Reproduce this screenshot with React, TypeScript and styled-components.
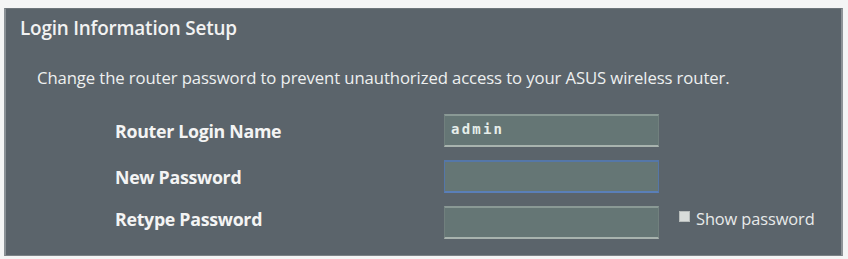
import React from "react";
import styled, { createGlobalStyle } from "styled-components";

const Global = createGlobalStyle`
  html, body { margin: 0; padding: 0; background: #f4f5f5; }
  body { font-family: "Open Sans", "Liberation Sans", sans-serif; }
`;

const Page = styled.div`
  width: 848px;
  height: 259px;
  padding: 8px 5px 3px 4px;
  box-sizing: border-box;
`;

const Panel = styled.section`
  height: 100%;
  box-sizing: border-box;
  background: #5b646b;
  border-left: 2px solid #8a9196;
  border-right: 2px solid #8d9397;
  border-top: 1px solid #6d757a;
  border-bottom: 1px solid #7b8286;
  padding: 6px 0 0 14px;
  color: #f2f2f2;
`;

const Title = styled.h1`
  margin: 0;
  font-size: 18.9px;
  font-weight: 600;
  line-height: 26px;
  letter-spacing: -0.2px;
`;

const Desc = styled.p`
  margin: 27px 0 0 17px;
  font-size: 16.7px;
  line-height: 20px;
  letter-spacing: -0.1px;
  color: #eef0f0;
`;

const Form = styled.div`
  display: grid;
  grid-template-columns: 329px 215px auto;
  row-gap: 13px;
  margin: 26px 0 0 95px;
  align-items: center;
`;

const Label = styled.label<{ $raise?: number }>`
  font-size: 17.8px;
  font-weight: 700;
  letter-spacing: -0.3px;
  color: #f4f4f4;
  margin-top: ${(p) => -(p.$raise ?? 0) * 2}px;
`;

const Input = styled.div<{ $focus?: boolean }>`
  height: 33px;
  box-sizing: border-box;
  background: #657675;
  border-top: 2px solid ${(p) => (p.$focus ? "#5577a8" : "#8a9995")};
  border-bottom: 2px solid ${(p) => (p.$focus ? "#5a7fb8" : "#a8b3ae")};
  border-left: 1px solid ${(p) => (p.$focus ? "#5577a8" : "#71807e")};
  border-right: 1px solid ${(p) => (p.$focus ? "#5577a8" : "#71807e")};
  padding: 5px 6px;
  font-family: "DejaVu Sans Mono", "Liberation Mono", monospace;
  font-size: 14px;
  font-weight: 700;
  letter-spacing: 2.2px;
  color: #e6eeea;
`;

const Check = styled.div`
  display: flex;
  align-items: center;
  gap: 6px;
  margin-left: 20px;
  margin-top: -8px;
  font-size: 16.4px;
  color: #e8eaea;
  letter-spacing: -0.1px;
`;

const Box = styled.span`
  width: 11px;
  height: 11px;
  background: #d8dcda;
  border: 1px solid #b8bdbc;
  box-sizing: border-box;
  margin-top: -4px;
`;

export default function App() {
  return (
    <>
      <Global />
      <Page>
        <Panel>
          <Title>Login Information Setup</Title>
          <Desc>
            Change the router password to prevent unauthorized access to your ASUS wireless router.
          </Desc>
          <Form>
            <Label>Router Login Name</Label>
            <Input>admin</Input>
            <span />
            <Label>New Password</Label>
            <Input $focus />
            <span />
            <Label $raise={4}>Retype Password</Label>
            <Input />
            <Check>
              <Box />
              Show password
            </Check>
          </Form>
        </Panel>
      </Page>
    </>
  );
}
